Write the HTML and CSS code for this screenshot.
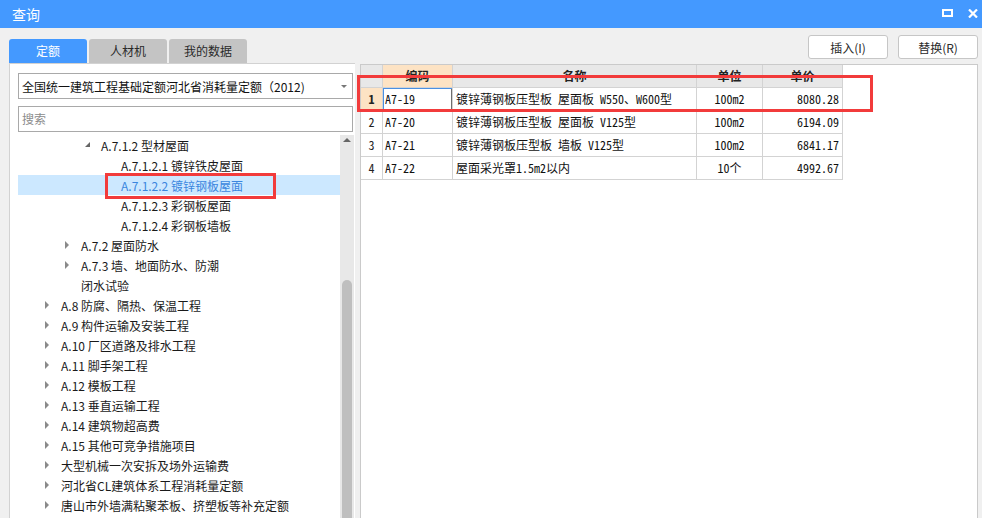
FILE: index.html
```html
<!DOCTYPE html>
<html lang="zh-CN">
<head>
<meta charset="utf-8">
<title>查询</title>
<link rel="stylesheet" href="styles.css">
</head>
<body>
<div class="window">
  <header class="titlebar">
    <span class="title">查询</span>
    <div class="winctl">
      <svg class="ico" width="11" height="8" viewBox="0 0 11 8"><rect x="1" y="1" width="9" height="6" fill="none" stroke="#fff" stroke-width="2"/></svg>
      <svg class="ico" width="10" height="9" viewBox="0 0 10 9"><path d="M1 0.5 L9 8.5 M9 0.5 L1 8.5" stroke="#fff" stroke-width="2.2" fill="none"/></svg>
    </div>
  </header>

  <div class="toolbar">
    <nav class="tabs">
      <span class="tab active">定额</span>
      <span class="tab">人材机</span>
      <span class="tab">我的数据</span>
    </nav>
    <div class="actions">
      <button class="btn">插入(I)</button>
      <button class="btn">替换(R)</button>
    </div>
  </div>

  <div class="panels">
    <aside class="left">
      <div class="select">
        <span>全国统一建筑工程基础定额河北省消耗量定额（2012)</span>
        <i class="caret"></i>
      </div>
      <div class="search">搜索</div>
      <div class="treewrap">
        <ul class="tree">
          <li class="row l3"><i class="tw open"></i><span>A.7.1.2 型材屋面</span></li>
          <li class="row l4"><i class="tw"></i><span>A.7.1.2.1 镀锌铁皮屋面</span></li>
          <li class="row l4 sel"><i class="tw"></i><span>A.7.1.2.2 镀锌钢板屋面</span><b class="mark-tree"></b></li>
          <li class="row l4"><i class="tw"></i><span>A.7.1.2.3 彩钢板屋面</span></li>
          <li class="row l4"><i class="tw"></i><span>A.7.1.2.4 彩钢板墙板</span></li>
          <li class="row l2"><i class="tw closed"></i><span>A.7.2 屋面防水</span></li>
          <li class="row l2"><i class="tw closed"></i><span>A.7.3 墙、地面防水、防潮</span></li>
          <li class="row l2"><i class="tw"></i><span>闭水试验</span></li>
          <li class="row l1"><i class="tw closed"></i><span>A.8 防腐、隔热、保温工程</span></li>
          <li class="row l1"><i class="tw closed"></i><span>A.9 构件运输及安装工程</span></li>
          <li class="row l1"><i class="tw closed"></i><span>A.10 厂区道路及排水工程</span></li>
          <li class="row l1"><i class="tw closed"></i><span>A.11 脚手架工程</span></li>
          <li class="row l1"><i class="tw closed"></i><span>A.12 模板工程</span></li>
          <li class="row l1"><i class="tw closed"></i><span>A.13 垂直运输工程</span></li>
          <li class="row l1"><i class="tw closed"></i><span>A.14 建筑物超高费</span></li>
          <li class="row l1"><i class="tw closed"></i><span>A.15 其他可竞争措施项目</span></li>
          <li class="row l1"><i class="tw closed"></i><span>大型机械一次安拆及场外运输费</span></li>
          <li class="row l1"><i class="tw closed"></i><span>河北省CL建筑体系工程消耗量定额</span></li>
          <li class="row l1"><i class="tw closed"></i><span>唐山市外墙满粘聚苯板、挤塑板等补充定额</span></li>
        </ul>
        <div class="scrollbar">
          <i class="sb-up"></i>
          <div class="sb-thumb"></div>
        </div>
      </div>
    </aside>

    <section class="right">
      <div class="grid">
        <div class="hc"></div>
        <div class="hc hc-sel">编码</div>
        <div class="hc">名称</div>
        <div class="hc">单位</div>
        <div class="hc">单价</div>

        <div class="rn rn-sel">1</div>
        <div class="c code focus">A7-19</div>
        <div class="c name">镀锌薄钢板压型板 屋面板 W550、W600型</div>
        <div class="c unit">100m2</div>
        <div class="c price">8080.28</div>

        <div class="rn">2</div>
        <div class="c code">A7-20</div>
        <div class="c name">镀锌薄钢板压型板 屋面板 V125型</div>
        <div class="c unit">100m2</div>
        <div class="c price">6194.09</div>

        <div class="rn">3</div>
        <div class="c code">A7-21</div>
        <div class="c name">镀锌薄钢板压型板 墙板 V125型</div>
        <div class="c unit">100m2</div>
        <div class="c price">6841.17</div>

        <div class="rn">4</div>
        <div class="c code">A7-22</div>
        <div class="c name">屋面采光罩1.5m2以内</div>
        <div class="c unit">10个</div>
        <div class="c price">4992.67</div>
      </div>
      <b class="mark-table"></b>
    </section>
  </div>
</div>
</body>
</html>
```

FILE: styles.css
```css
* { box-sizing: border-box; }

html, body {
  margin: 0;
  padding: 0;
}

body {
  width: 982px;
  height: 518px;
  overflow: hidden;
  background: #f0f0f0;
  font-family: "Noto Sans CJK SC", "Noto Sans", sans-serif;
  font-size: 12px;
  color: #1a1a1a;
}

.window {
  display: flex;
  flex-direction: column;
  height: 518px;
}

/* title bar */
.titlebar {
  height: 28px;
  flex: none;
  background: #4499ff;
  display: flex;
  align-items: center;
  padding: 0 4px 0 12px;
}

.title {
  color: #fff;
  font-size: 14px;
  line-height: 28px;
}

.winctl {
  margin-left: auto;
  display: flex;
  align-items: flex-start;
  gap: 15px;
  align-self: flex-start;
  padding-top: 9px;
}

.ico { display: block; }

/* toolbar */
.toolbar {
  height: 35px;
  flex: none;
  display: flex;
  justify-content: space-between;
  padding: 0 4px 0 9px;
}

.tabs {
  align-self: flex-end;
  display: flex;
  gap: 2px;
}

.tab {
  width: 78px;
  height: 24px;
  line-height: 24px;
  text-align: center;
  background: #c4c4c4;
  color: #2a2a2a;
  border-radius: 3px 3px 0 0;
}

.tab.active {
  background: #4499ff;
  color: #fff;
}

.actions {
  display: flex;
  gap: 10px;
  margin-top: 7px;
}

.btn {
  width: 80px;
  height: 24px;
  border: 1px solid #c6c6c6;
  border-radius: 3px;
  background: #fff;
  font-family: inherit;
  font-size: 12px;
  color: #2a2a2a;
  padding: 0;
}

/* panels */
.panels {
  flex: 1;
  min-height: 0;
  display: flex;
  gap: 5px;
  padding: 0 4px 0 9px;
}

.left {
  width: 346px;
  flex: none;
  background: #fff;
  border-top: 1px solid #d2d2d2;
  border-left: 1px solid #d2d2d2;
  padding: 9px 1px 0 8px;
  display: flex;
  flex-direction: column;
  min-height: 0;
}

.select {
  width: 335px;
  height: 26px;
  flex: none;
  border: 1px solid #a9a9a9;
  display: flex;
  align-items: center;
  padding-left: 3px;
  color: #111;
  white-space: nowrap;
}

.caret {
  margin-left: auto;
  margin-right: 5px;
  width: 0;
  height: 0;
  border-top: 3px solid #777;
  border-left: 3px solid transparent;
  border-right: 3px solid transparent;
}

.search {
  width: 335px;
  height: 26px;
  flex: none;
  margin-top: 7px;
  border: 1px solid #a9a9a9;
  padding-left: 3px;
  line-height: 24px;
  color: #8c8c8c;
}

.treewrap {
  margin-top: 3px;
  flex: 1;
  min-height: 0;
  display: flex;
  overflow: hidden;
}

.tree {
  list-style: none;
  margin: 0;
  padding: 0;
  flex: 1;
}

.row {
  position: relative;
  height: 20px;
  display: flex;
  align-items: center;
  white-space: nowrap;
  color: #1a1a1a;
}

.row.l1 { padding-left: 27px; }
.row.l2 { padding-left: 47px; }
.row.l3 { padding-left: 67px; }
.row.l4 { padding-left: 87px; }

.row.sel {
  background: #cce8ff;
  color: #3a86de;
}

.tw {
  width: 16px;
  height: 20px;
  flex: none;
  display: flex;
  align-items: center;
}

.tw.closed::before {
  content: "";
  width: 0;
  height: 0;
  border-left: 4px solid #8a8a8a;
  border-top: 4px solid transparent;
  border-bottom: 4px solid transparent;
}

.tw.open::before {
  content: "";
  width: 0;
  height: 0;
  border-bottom: 5px solid #666;
  border-left: 5px solid transparent;
  margin-top: -2px;
}

.mark-tree {
  position: absolute;
  left: 87px;
  top: -2px;
  width: 171px;
  height: 26px;
  border: 3px solid #f23b3b;
  pointer-events: none;
}

.scrollbar {
  width: 14px;
  flex: none;
  background: #e8e8e8;
  display: flex;
  flex-direction: column;
  align-items: center;
}

.sb-up {
  flex: none;
  margin-top: 3px;
  width: 0;
  height: 0;
  border-bottom: 4px solid #666;
  border-left: 4px solid transparent;
  border-right: 4px solid transparent;
}

.sb-thumb {
  flex: 1;
  width: 10px;
  margin-top: 138px;
  background: #bfbfbf;
  border-radius: 5px 5px 0 0;
}

/* right panel / grid */
.right {
  flex: 1;
  position: relative;
  margin-top: 1px;
  background: #fff;
  border: 1px solid #cacaca;
  border-bottom: none;
}

.grid {
  display: grid;
  grid-template-columns: 22px 70px 244px 66px 80px;
  grid-auto-rows: 23px;
  width: 482px;
  font-family: "Noto Sans Mono CJK SC", "Noto Sans CJK SC", monospace;
  font-size: 12px;
  color: #111;
}

.grid > div {
  border-right: 1px solid #d3d3d3;
  border-bottom: 1px solid #d3d3d3;
  line-height: 22px;
  white-space: nowrap;
  overflow: hidden;
}

.hc {
  background: #e8e8e8;
  text-align: center;
  font-weight: bold;
  color: #222;
}

.hc-sel { background: #fde3c4; }

.rn {
  text-align: center;
  color: #222;
}

.rn-sel {
  background: #fde3c4;
  font-weight: bold;
}

.code { padding-left: 2px; }
.name { padding-left: 3px; }
.unit { text-align: center; }
.price { text-align: right; padding-right: 3px; }

.focus {
  box-shadow: inset 1px 1px 0 #4a90e2, inset -1px -1px 0 #6e6e6e;
}

.mark-table {
  position: absolute;
  left: -4px;
  top: 10px;
  width: 516px;
  height: 37px;
  border: 3px solid #f23b3b;
  pointer-events: none;
}
```
